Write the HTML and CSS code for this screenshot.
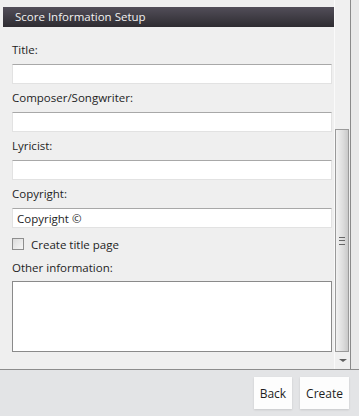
FILE: index.html
```html
<!DOCTYPE html>
<html lang="en">
<head>
    <meta charset="UTF-8">
    <title>Score Information Setup</title>
    <link rel="stylesheet" href="styles.css">
</head>
<body>
    <div class="window">
        <div class="panel">
            <div class="form">
                <div class="section-title">Score Information Setup</div>

                <label class="field-label">Title:</label>
                <input type="text" class="text-box">

                <label class="field-label">Composer/Songwriter:</label>
                <input type="text" class="text-box">

                <label class="field-label">Lyricist:</label>
                <input type="text" class="text-box">

                <label class="field-label">Copyright:</label>
                <input type="text" class="text-box" value="Copyright ©">

                <label class="check-row">
                    <span class="check-box"></span>
                    Create title page
                </label>

                <label class="field-label other">Other information:</label>
                <textarea class="text-area"></textarea>
            </div>

            <div class="scrollbar">
                <div class="track"></div>
                <div class="thumb">
                    <span class="grip"></span>
                </div>
                <div class="arrow-down"></div>
            </div>
            <div class="edge"></div>
        </div>

        <div class="footer">
            <button class="footer-btn">Back</button>
            <button class="footer-btn">Create</button>
        </div>
    </div>
</body>
</html>
```

FILE: styles.css
```css
:root {
    --panel-bg: #efefef;
    --footer-bg: #e3e4e6;
    --text-color: #1e1e1e;
    --line-color: #8c8c8c;
}
body {
    margin: 0;
    padding: 0;
    background-color: var(--footer-bg);
    font-family: 'Open Sans', 'Noto Sans', sans-serif;
    font-size: 11.5px;
    color: var(--text-color);
}
.window {
    width: 359px;
    height: 416px;
    display: flex;
    flex-direction: column;
}
.panel {
    height: 369px;
    display: flex;
    background-color: var(--panel-bg);
    border-bottom: 1px solid var(--line-color);
}
.form {
    width: 332px;
    padding: 7px 0 0 3px;
    display: flex;
    flex-direction: column;
}
.section-title {
    height: 20px;
    line-height: 20px;
    padding-left: 12px;
    background: linear-gradient(#524e59, #2e2c31);
    color: #f2f2f2;
    font-size: 11.5px;
    margin-bottom: 15px;
}
.field-label {
    margin-left: 9px;
    height: 16px;
    line-height: 16px;
    margin-bottom: 6px;
}
.text-box {
    margin: 0 0 6px 9px;
    width: 320px;
    height: 20px;
    box-sizing: border-box;
    border: 1px solid #e2e2e2;
    border-top-color: #a8a8a8;
    background-color: #fff;
    font-family: inherit;
    font-size: 11.5px;
    color: var(--text-color);
    padding: 0 4px;
    outline: none;
}
.check-row {
    margin-left: 9px;
    height: 14px;
    display: flex;
    align-items: center;
    gap: 7px;
    margin-top: 3px;
    margin-bottom: 9px;
}
.check-box {
    width: 10px;
    height: 10px;
    border: 1px solid #8e8e8e;
    background: linear-gradient(135deg, #dcdcdc, #f6f6f6);
}
.field-label.other {
    margin-bottom: 5px;
}
.text-area {
    margin-left: 9px;
    width: 320px;
    height: 71px;
    box-sizing: border-box;
    border: 1px solid #8a8a8a;
    background-color: #fff;
    resize: none;
    outline: none;
}
.scrollbar {
    width: 15px;
    display: flex;
    flex-direction: column;
    background-color: #f0f0f0;
    border-left: 1px solid #fafafa;
}
.track {
    height: 129px;
}
.thumb {
    height: 223px;
    margin: 0 1px 0 0;
    border: 1px solid #9a9a9a;
    box-sizing: border-box;
    background: linear-gradient(90deg, #f2f2f2, #dcdcdc 60%, #c9c9c9);
    display: flex;
    align-items: center;
    justify-content: center;
}
.grip {
    width: 6px;
    height: 6px;
    border-top: 1px solid #666;
    border-bottom: 1px solid #666;
    position: relative;
}
.grip::after {
    content: "";
    position: absolute;
    left: 0;
    right: 0;
    top: 2px;
    border-top: 1px solid #666;
}
.arrow-down {
    flex: 1;
    display: flex;
    align-items: center;
    justify-content: center;
}
.arrow-down::before {
    content: "";
    border-left: 4px solid transparent;
    border-right: 4px solid transparent;
    border-top: 3px solid #606060;
}
.edge {
    width: 1px;
    background-color: #8a8a8a;
    border-right: 8px solid #e9e9e9;
}
.footer {
    flex: 1;
    display: flex;
    justify-content: flex-end;
    align-items: flex-start;
    gap: 8px;
    padding: 7px 10px 0 0;
}
.footer-btn {
    height: 32px;
    padding: 0 6px;
    background-color: #fdfdfd;
    border: none;
    box-shadow: 0 1px 2px rgba(0,0,0,0.12);
    font-family: inherit;
    font-size: 12px;
    color: var(--text-color);
}
```
